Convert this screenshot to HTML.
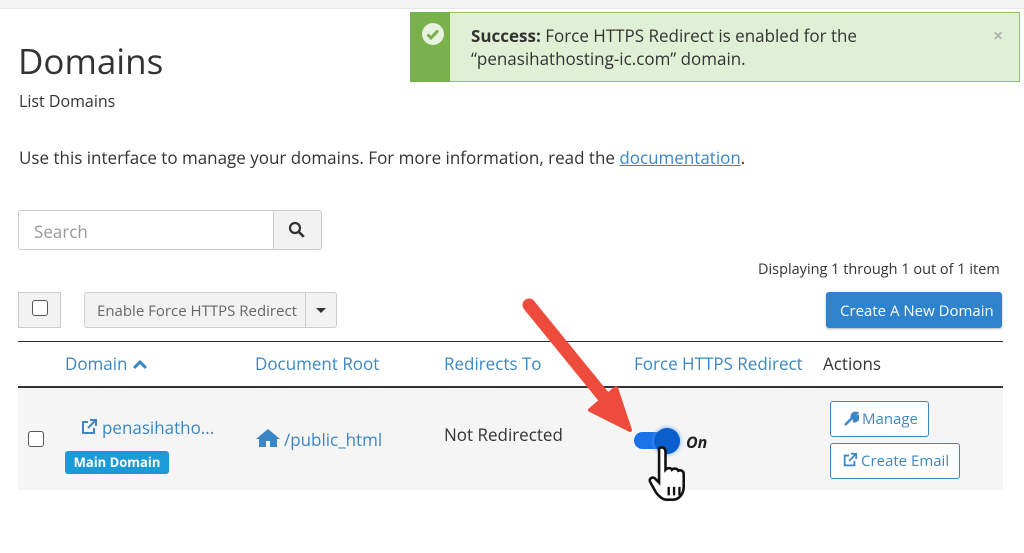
<!DOCTYPE html>
<html><head><meta charset="utf-8"><style>
body{margin:0;width:1024px;height:553px;background:#fff;font-family:"Open Sans","Liberation Sans",sans-serif;position:relative;overflow:hidden;color:#333}
.a{position:absolute;white-space:nowrap}
.blue{color:#3b87c6}
.btn{position:absolute;box-sizing:border-box;border:1px solid #ccc;background:#f2f2f2}
</style></head><body>
<div class="a" style="left:0;top:0;width:1024px;height:8px;background:#f4f4f4;border-bottom:1px solid #e6e6e6"></div>
<div class="a" style="left:18px;top:38px;font-size:35px;color:#333">Domains</div>
<div class="a" style="left:19px;top:90px;font-size:16px">List Domains</div>
<div class="a" style="left:19px;top:146px;font-size:17px">Use this interface to manage your domains. For more information, read the <span class="blue" style="text-decoration:underline">documentation</span>.</div>

<div class="a" style="left:410px;top:12px;width:610px;height:70px;box-sizing:border-box;border:1px solid #8fc26b;background:#dff0d5"></div>
<div class="a" style="left:410px;top:12px;width:40px;height:70px;background:#79b14d"></div>
<svg class="a" style="left:421px;top:22px" width="24" height="24" viewBox="0 0 24 24"><circle cx="12" cy="12" r="11" fill="#e8f3df"/><path d="M6.5 12.5l3.5 3.5 7-7.5" stroke="#79b14d" stroke-width="3" fill="none"/></svg>
<div class="a" style="left:471px;top:24px;font-size:17px;line-height:23px;color:#333"><b>Success:</b> Force HTTPS Redirect is enabled for the<br>“penasihathosting-ic.com” domain.</div>
<div class="a" style="left:993px;top:24px;font-size:18px;color:#b5b5b5;font-weight:bold">×</div>

<div class="a" style="left:18px;top:210px;width:256px;height:40px;box-sizing:border-box;border:1px solid #ccc;border-right:none;border-radius:3px 0 0 3px"></div>
<div class="a" style="left:34px;top:220px;font-size:17px;color:#999">Search</div>
<div class="btn" style="left:273px;top:210px;width:49px;height:40px;border-radius:0 3px 3px 0"></div>
<svg class="a" style="left:288px;top:221px" width="18" height="18" viewBox="0 0 18 18"><circle cx="7" cy="7" r="5" stroke="#333" stroke-width="2.2" fill="none"/><path d="M10.8 10.8l5 5" stroke="#333" stroke-width="2.6"/></svg>

<div class="a" style="left:758px;top:260px;font-size:14.5px">Displaying 1 through 1 out of 1 item</div>

<div class="btn" style="left:18px;top:292px;width:43px;height:36px"></div>
<div class="a" style="left:32px;top:300px;width:14px;height:14px;border:1px solid #555;border-radius:3px;background:#fff"></div>
<div class="btn" style="left:84px;top:292px;width:222px;height:36px;border-radius:3px 0 0 3px"></div>
<div class="a" style="left:97px;top:301px;font-size:15px;color:#666">Enable Force HTTPS Redirect</div>
<div class="btn" style="left:305px;top:292px;width:32px;height:36px;border-radius:0 3px 3px 0"></div>
<div class="a" style="left:316px;top:308px;border:5px solid transparent;border-top:5px solid #333;border-bottom:none"></div>

<div class="a" style="left:826px;top:292px;width:176px;height:36px;background:#2f83cc;border-radius:3px;box-shadow:0 1px 2px rgba(0,0,0,.3)"></div>
<div class="a" style="left:840px;top:301px;font-size:15px;color:#fff">Create A New Domain</div>

<div class="a" style="left:18px;top:341px;width:985px;height:1px;background:#333"></div>
<div class="a blue" style="left:65px;top:352px;font-size:17px">Domain <svg width="16" height="12" viewBox="0 0 16 12"><path d="M2 10l6-6 6 6" stroke="#3b87c6" stroke-width="3" fill="none"/></svg></div>
<div class="a blue" style="left:255px;top:352px;font-size:17px">Document Root</div>
<div class="a blue" style="left:444px;top:352px;font-size:17px">Redirects To</div>
<div class="a blue" style="left:634px;top:352px;font-size:17px">Force HTTPS Redirect</div>
<div class="a" style="left:823px;top:352px;font-size:17px">Actions</div>
<div class="a" style="left:18px;top:386px;width:985px;height:2px;background:#333"></div>
<div class="a" style="left:18px;top:388px;width:985px;height:102px;background:#f5f5f5"></div>

<div class="a" style="left:28px;top:431px;width:14px;height:14px;border:1px solid #555;border-radius:3px;background:#fff"></div>
<svg class="a" style="left:80px;top:418px" width="18" height="18" viewBox="0 0 18 18"><path d="M14 10v5H3V4h5" stroke="#3b87c6" stroke-width="2" fill="none"/><path d="M10 2h6v6M16 2L8 10" stroke="#3b87c6" stroke-width="2" fill="none"/></svg>
<div class="a blue" style="left:102px;top:416px;font-size:17px">penasihatho...</div>
<div class="a" style="left:65px;top:451px;width:104px;height:23px;background:#1a9bd7;border-radius:3px;color:#fff;font-size:13px;font-weight:bold;line-height:23px;text-align:center">Main Domain</div>
<svg class="a" style="left:256px;top:428px" width="24" height="20" viewBox="0 0 24 20"><path d="M12 1L0 11h3v8h7v-6h4v6h7v-8h3z" fill="#3b87c6"/></svg>
<div class="a blue" style="left:284px;top:428px;font-size:17px">/public_html</div>
<div class="a" style="left:444px;top:423px;font-size:17px">Not Redirected</div>

<div class="a" style="left:634px;top:432px;width:46px;height:17px;background:#1a73e8;border-radius:9px"></div>
<div class="a" style="left:654px;top:428px;width:26px;height:26px;background:#0b5fcc;border-radius:50%;box-shadow:0 0 4px #5aa0ff"></div>
<div class="a" style="left:686px;top:431px;font-size:16px;font-weight:bold;font-style:italic;color:#222">On</div>
<svg class="a" style="left:646px;top:444px" width="54" height="60" viewBox="0 0 50 56"><path d="M12 4c3-2 6 0 6 3v17c2-2 5-2 6 0 2-2 5-1 6 1 2-1 5 0 5 3v12c0 6-4 12-10 12h-6c-4 0-7-3-10-7L4 36c-2-3 1-6 4-4l4 4z" fill="#fff" stroke="#111" stroke-width="2.4"/><path d="M21 40v8M26 40v8M31 40v8" stroke="#111" stroke-width="2.2"/></svg>

<svg class="a" style="left:0;top:0" width="1024" height="553"><path d="M529 305L603 396" stroke="#ed4c3c" stroke-width="13" stroke-linecap="round"/><path d="M630 430L590 410L616 388z" fill="#ed4c3c" stroke="#ed4c3c" stroke-width="4" stroke-linejoin="round"/></svg>

<div class="a" style="left:830px;top:401px;width:99px;height:36px;box-sizing:border-box;border:1px solid #3b87c6;border-radius:3px;background:#fff"></div>
<svg class="a" style="left:843px;top:411px" width="16" height="16" viewBox="0 0 16 16"><path d="M2 14l7-7M9 7c-1-3 1-6 5-5l-2 2 1 2 2-1c1 4-2 6-5 5" stroke="#3b87c6" stroke-width="2.4" fill="#3b87c6"/></svg>
<div class="a blue" style="left:862px;top:409px;font-size:15px">Manage</div>
<div class="a" style="left:830px;top:443px;width:130px;height:36px;box-sizing:border-box;border:1px solid #3b87c6;border-radius:3px;background:#fff"></div>
<svg class="a" style="left:842px;top:452px" width="16" height="16" viewBox="0 0 18 18"><path d="M14 10v5H3V4h5" stroke="#3b87c6" stroke-width="2" fill="none"/><path d="M10 2h6v6M16 2L8 10" stroke="#3b87c6" stroke-width="2" fill="none"/></svg>
<div class="a blue" style="left:861px;top:451px;font-size:15px">Create Email</div>
</body></html>
